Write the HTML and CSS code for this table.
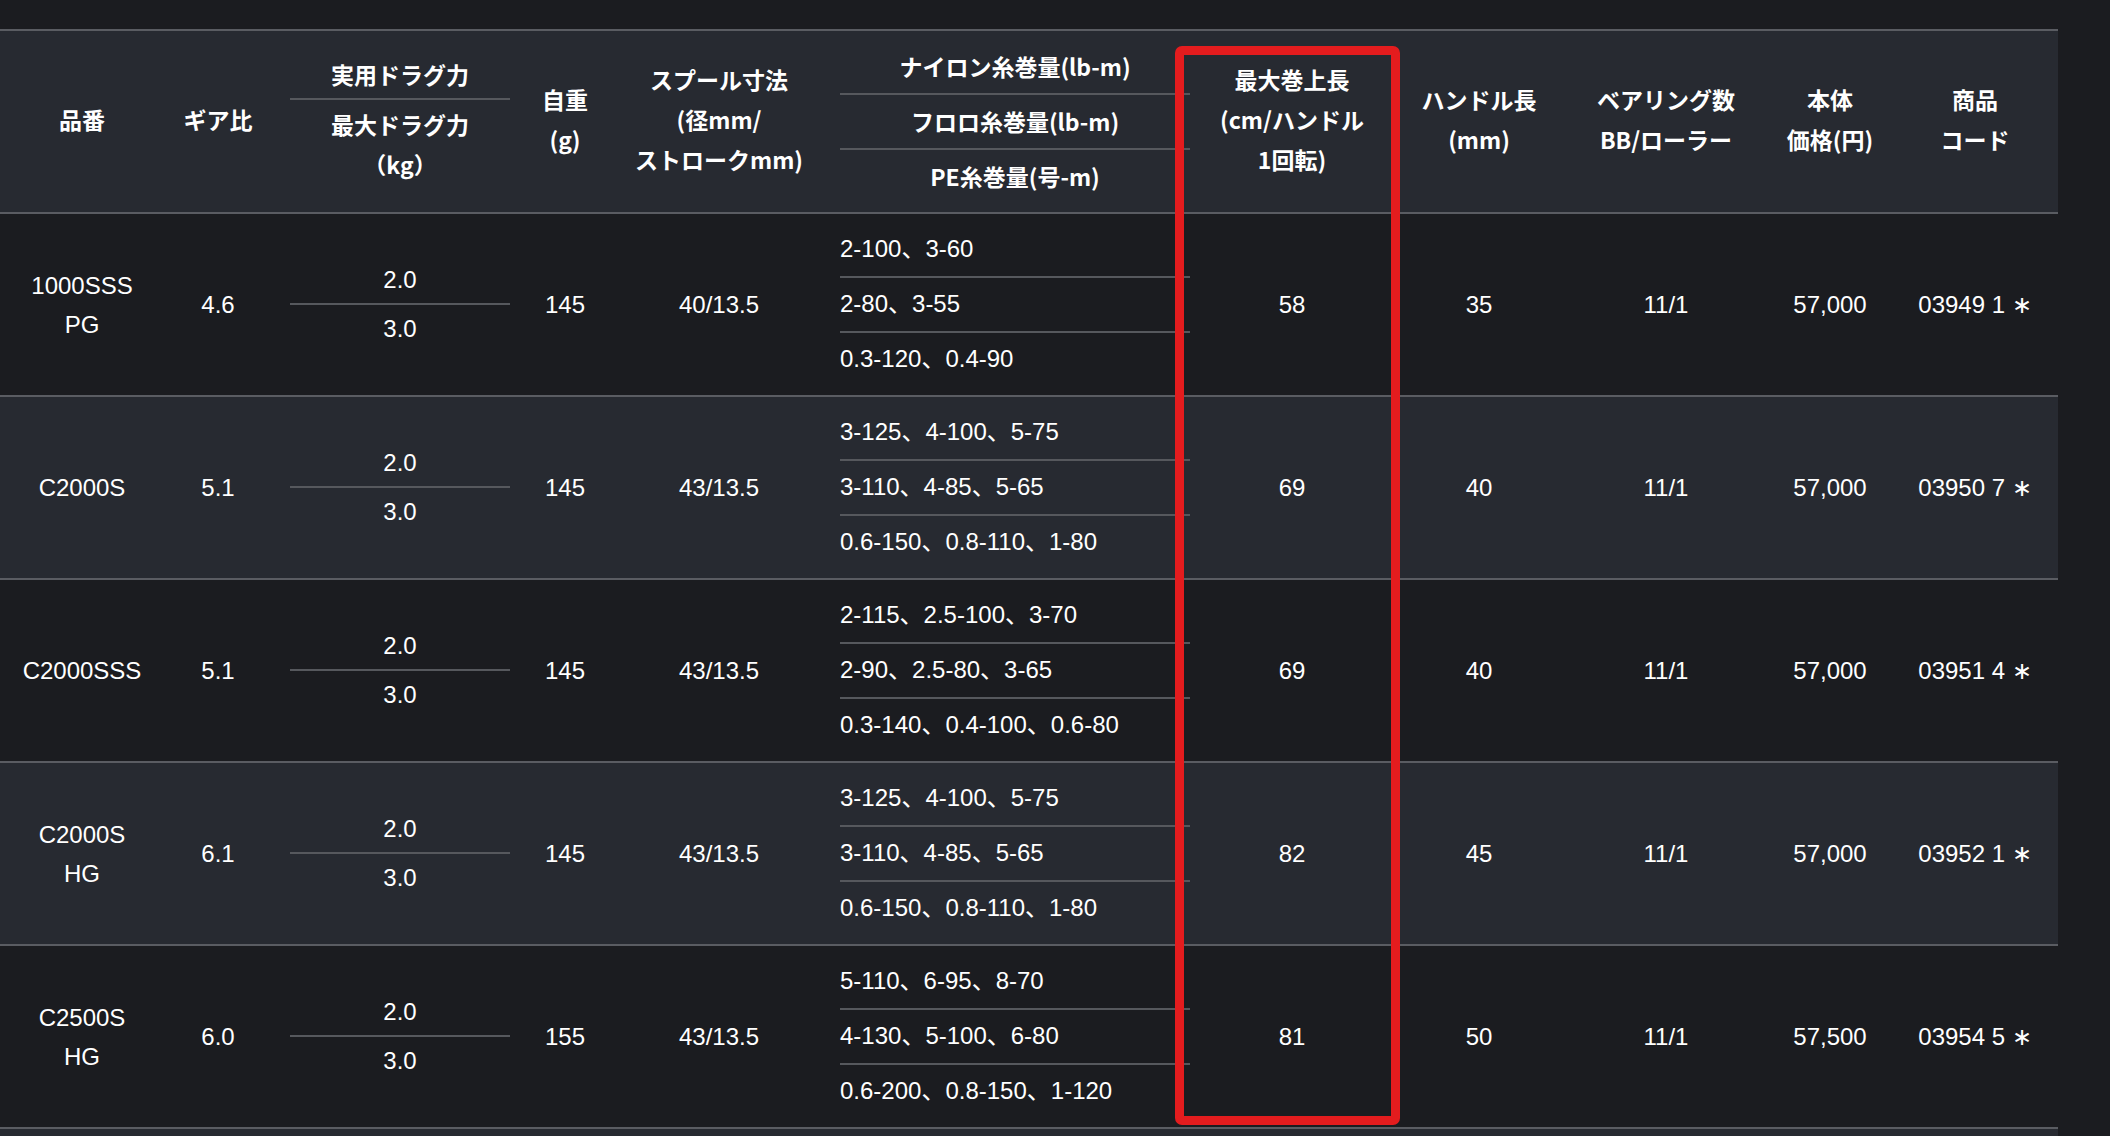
FILE: index.html
```html
<!DOCTYPE html>
<html lang="ja">
<head>
    <meta charset="UTF-8">
    <title>スペック表</title>
    <link rel="stylesheet" href="styles.css">
</head>
<body>
    <div id="specBox">
        <table class="spec">
            <colgroup>
                <col class="c-no">
                <col class="c-gear">
                <col class="c-drag">
                <col class="c-weight">
                <col class="c-spool">
                <col class="c-line">
                <col class="c-retrieve">
                <col class="c-handle">
                <col class="c-bearing">
                <col class="c-price">
                <col class="c-code">
            </colgroup>
            <thead>
                <tr>
                    <th>品番</th>
                    <th>ギア比</th>
                    <th>
                        <div class="split">
                            <p>実用ドラグ力</p>
                            <p>最大ドラグ力<br>（kg）</p>
                        </div>
                    </th>
                    <th>自重<br>(g)</th>
                    <th>スプール寸法<br>(径mm/<br>ストロークmm)</th>
                    <th class="cap">
                        <div class="lines">
                            <p>ナイロン糸巻量(lb-m)</p>
                            <p>フロロ糸巻量(lb-m)</p>
                            <p>PE糸巻量(号-m)</p>
                        </div>
                    </th>
                    <th>最大巻上長<br>(cm/ハンドル<br>1回転)</th>
                    <th>ハンドル長<br>(mm)</th>
                    <th>ベアリング数<br>BB/ローラー</th>
                    <th>本体<br>価格(円)</th>
                    <th>商品<br>コード</th>
                </tr>
            </thead>
            <tbody>
                <tr>
                    <td>1000SSS<br>PG</td>
                    <td>4.6</td>
                    <td><div class="split"><p>2.0</p><p>3.0</p></div></td>
                    <td>145</td>
                    <td>40/13.5</td>
                    <td class="cap"><div class="lines"><p>2-100、3-60</p><p>2-80、3-55</p><p>0.3-120、0.4-90</p></div></td>
                    <td>58</td>
                    <td>35</td>
                    <td>11/1</td>
                    <td>57,000</td>
                    <td>03949 1 ∗</td>
                </tr>
                <tr>
                    <td>C2000S</td>
                    <td>5.1</td>
                    <td><div class="split"><p>2.0</p><p>3.0</p></div></td>
                    <td>145</td>
                    <td>43/13.5</td>
                    <td class="cap"><div class="lines"><p>3-125、4-100、5-75</p><p>3-110、4-85、5-65</p><p>0.6-150、0.8-110、1-80</p></div></td>
                    <td>69</td>
                    <td>40</td>
                    <td>11/1</td>
                    <td>57,000</td>
                    <td>03950 7 ∗</td>
                </tr>
                <tr>
                    <td>C2000SSS</td>
                    <td>5.1</td>
                    <td><div class="split"><p>2.0</p><p>3.0</p></div></td>
                    <td>145</td>
                    <td>43/13.5</td>
                    <td class="cap"><div class="lines"><p>2-115、2.5-100、3-70</p><p>2-90、2.5-80、3-65</p><p>0.3-140、0.4-100、0.6-80</p></div></td>
                    <td>69</td>
                    <td>40</td>
                    <td>11/1</td>
                    <td>57,000</td>
                    <td>03951 4 ∗</td>
                </tr>
                <tr>
                    <td>C2000S<br>HG</td>
                    <td>6.1</td>
                    <td><div class="split"><p>2.0</p><p>3.0</p></div></td>
                    <td>145</td>
                    <td>43/13.5</td>
                    <td class="cap"><div class="lines"><p>3-125、4-100、5-75</p><p>3-110、4-85、5-65</p><p>0.6-150、0.8-110、1-80</p></div></td>
                    <td>82</td>
                    <td>45</td>
                    <td>11/1</td>
                    <td>57,000</td>
                    <td>03952 1 ∗</td>
                </tr>
                <tr>
                    <td>C2500S<br>HG</td>
                    <td>6.0</td>
                    <td><div class="split"><p>2.0</p><p>3.0</p></div></td>
                    <td>155</td>
                    <td>43/13.5</td>
                    <td class="cap"><div class="lines"><p>5-110、6-95、8-70</p><p>4-130、5-100、6-80</p><p>0.6-200、0.8-150、1-120</p></div></td>
                    <td>81</td>
                    <td>50</td>
                    <td>11/1</td>
                    <td>57,500</td>
                    <td>03954 5 ∗</td>
                </tr>
                <tr class="rest">
                    <td colspan="11"></td>
                </tr>
            </tbody>
        </table>
        <!-- 赤枠：最大巻上長 -->
        <span class="mark"></span>
    </div>
</body>
</html>
```

FILE: styles.css
```css
* {
    margin: 0;
    padding: 0;
}

html,
body {
    height: 100%;
}

body {
    background: #1b1c20;
    color: #fff;
    font-family: "Liberation Sans", "Noto Sans CJK JP", sans-serif;
    overflow: hidden;
}

#specBox {
    position: relative;
    padding-top: 29px;
}

.spec {
    width: 2058px;
    table-layout: fixed;
    border-collapse: separate;
    border-spacing: 0;
}

.c-no { width: 164px; }
.c-gear { width: 108px; }
.c-drag { width: 256px; }
.c-weight { width: 74px; }
.c-spool { width: 234px; }
.c-line { width: 354px; }
.c-retrieve { width: 204px; }
.c-handle { width: 170px; }
.c-bearing { width: 204px; }
.c-price { width: 124px; }
.c-code { width: 166px; }

.spec th,
.spec td {
    text-align: center;
    vertical-align: middle;
    border-bottom: 2px solid #5a5c62;
}

/* 見出しは少し上に寄せる */
.spec thead th {
    height: 175px;
    padding-bottom: 6px;
    background: #272a31;
    border-top: 2px solid #5a5c62;
    font-family: "Noto Sans CJK JP", sans-serif;
    font-weight: bold;
    font-size: 23px;
    line-height: 40px;
}

.spec td {
    height: 181px;
    font-size: 24px;
    line-height: 39px;
}

.spec tbody tr:nth-child(even) td {
    background: #272a31;
}

.split {
    margin: 0 18px;
    line-height: 40px;
}

.split p:first-child {
    padding-bottom: 3px;
}

.split p + p {
    border-top: 2px solid #56585d;
    padding-top: 4px;
}

thead .split p:first-child {
    padding-bottom: 4px;
}

.spec .cap {
    padding-left: 4px;
    text-align: left;
}

.spec thead .cap {
    height: 181px;
    padding-bottom: 0;
    text-align: center;
}

.lines p {
    padding: 6px 0 7px;
    line-height: 40px;
}

.lines p + p {
    border-top: 2px solid #56585d;
}

.mark {
    position: absolute;
    left: 1175px;
    top: 46px;
    width: 225px;
    height: 1079px;
    box-sizing: border-box;
    border: 9px solid #e41c1e;
    border-radius: 7px;
}
```
